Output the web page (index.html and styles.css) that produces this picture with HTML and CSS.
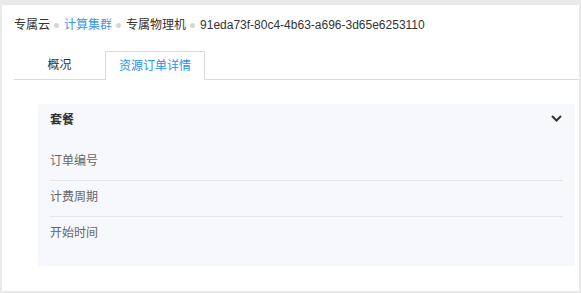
FILE: index.html
```html
<!DOCTYPE html>
<html lang="zh">
<head>
<meta charset="utf-8">
<link rel="stylesheet" href="styles.css">
</head>
<body>
<div class="page">
  <div class="crumbs">
    <span class="crumb">专属云</span>
    <span class="sep"></span>
    <span class="crumb link">计算集群</span>
    <span class="sep"></span>
    <span class="crumb">专属物理机</span>
    <span class="sep"></span>
    <span class="crumb">91eda73f-80c4-4b63-a696-3d65e6253110</span>
  </div>
  <div class="tabs">
    <div class="tab">概况</div>
    <div class="tab active">资源订单详情</div>
  </div>
  <div class="panel">
    <div class="panel-head">
      <span class="panel-title">套餐</span>
      <svg class="chev" width="11" height="7" viewBox="0 0 11 7"><path d="M1 1 L5.5 5.5 L10 1" fill="none" stroke="#333" stroke-width="2"/></svg>
    </div>
    <div class="rows">
      <div class="row">订单编号</div>
      <div class="row">计费周期</div>
      <div class="row">开始时间</div>
    </div>
  </div>
</div>
</body>
</html>
```
FILE: styles.css
```css
html, body {
  margin: 0;
  padding: 0;
}
body {
  background: #e9e9e9;
  font-family: "Liberation Sans", "Noto Sans CJK SC", sans-serif;
  font-size: 12px;
  color: #333;
}
.page {
  margin: 5px 2px 2px 2px;
  height: 286px;
  background: #fff;
  box-sizing: border-box;
  padding-top: 12px;
}
.crumbs {
  display: flex;
  align-items: center;
  padding-left: 12px;
  line-height: 16px;
  height: 16px;
}
.crumb {
  color: #333;
}
.crumb.link {
  color: #3a97e8;
}
.sep {
  width: 5px;
  height: 5px;
  border-radius: 50%;
  background: #d6d6d6;
  margin: 0 5px 0 4px;
}
.tabs {
  display: flex;
  margin: 18px 0 0 12px;
  border-bottom: 1px solid #dcdcdc;
  height: 28px;
}
.tab {
  width: 91px;
  text-align: center;
  line-height: 28px;
  color: #333;
}
.tab.active {
  width: auto;
  padding: 0 13px;
  color: #2196f3;
  background: #fff;
  border: 1px solid #dcdcdc;
  border-bottom: none;
  height: 29px;
  box-sizing: border-box;
  line-height: 28px;
  margin-bottom: -1px;
}
.panel {
  margin: 24px 4px 0 36px;
  background: #f7f8fc;
  padding: 0 12px 13px 12px;
}
.panel-head {
  display: flex;
  align-items: center;
  justify-content: space-between;
  height: 28px;
}
.panel-title {
  font-weight: bold;
  color: #333;
}
.chev {
  margin-right: 1px;
  display: block;
}
.rows {
  margin-top: 13px;
}
.row {
  height: 36px;
  box-sizing: border-box;
  padding-top: 8px;
  line-height: 16px;
  color: #666;
  border-bottom: 1px solid #e4e6eb;
}
.row:last-child {
  border-bottom: none;
}
```
